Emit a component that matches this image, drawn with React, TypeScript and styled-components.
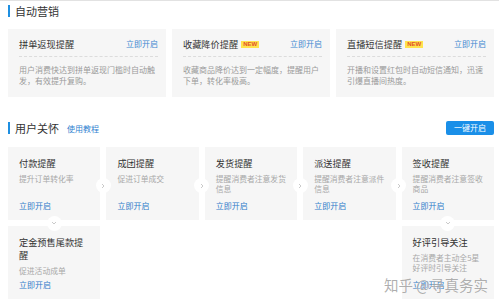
import React from "react";
import styled, { createGlobalStyle, css } from "styled-components";

const GlobalStyle = createGlobalStyle`
  * { box-sizing: border-box; }
  html, body { margin: 0; padding: 0; background: #fff; }
  body {
    font-family: "Noto Sans CJK SC", "Noto Sans", sans-serif;
    color: #333;
  }
`;

const Page = styled.div`
  position: relative;
  width: 499px;
  height: 308px;
  overflow: hidden;
  border-top: 1px solid #e2e2e2;
  padding: 0 5px 0 8px;
`;

const SectionHead = styled.div<{ $top: number }>`
  display: flex;
  align-items: center;
  height: 14px;
  margin-top: ${({ $top }) => $top}px;
`;

const HeadTitle = styled.h2`
  margin: 0;
  padding-left: 5px;
  border-left: 2px solid #1e8fe1;
  font-size: 11px;
  line-height: 12px;
  font-weight: normal;
  color: #333;
`;

const HelpLink = styled.a`
  margin-left: 8px;
  font-size: 8px;
  color: #2f7fd0;
  text-decoration: none;
`;

const OneKeyButton = styled.button`
  margin-left: auto;
  width: 48px;
  height: 14px;
  padding: 0;
  border: none;
  border-radius: 2px;
  background: #1a8fe8;
  color: #fff;
  font-family: inherit;
  font-size: 8px;
  line-height: 14px;
`;

const PromoGrid = styled.div`
  display: grid;
  grid-template-columns: repeat(3, 1fr);
  gap: 6px;
  margin-top: 11px;
`;

const PromoCard = styled.div`
  height: 68px;
  background: #f6f6f6;
  padding: 8px 8px 0 11px;
`;

const PromoHead = styled.div`
  display: flex;
  align-items: center;
  height: 20px;
  padding-bottom: 5px;
  border-bottom: 1px dashed #dcdcdc;
`;

const PromoTitle = styled.span`
  font-size: 9.2px;
  line-height: 14px;
  color: #333;
`;

const NewBadge = styled.span`
  margin-left: 3px;
  padding: 0 2px;
  background: #ffe34d;
  color: #e2512a;
  font-family: "Liberation Sans", Arial, sans-serif;
  font-size: 6px;
  font-weight: bold;
  line-height: 7px;
`;

const PromoLink = styled.a`
  margin-left: auto;
  font-size: 8px;
  line-height: 14px;
  color: #3d86d0;
  text-decoration: none;
`;

const PromoDesc = styled.p`
  margin: 7px 0 0;
  font-size: 8px;
  line-height: 11px;
  color: #9a9a9a;
`;

const CareGrid = styled.div`
  display: grid;
  grid-template-columns: repeat(5, 1fr);
  grid-auto-rows: 73px;
  gap: 6px;
  margin-top: 12px;
`;

const CareCard = styled.div<{ $col?: number }>`
  position: relative;
  display: flex;
  flex-direction: column;
  background: #f6f6f6;
  padding: 10px 9px 8px 11px;
  ${({ $col }) => $col && css`grid-column: ${$col};`}
`;

const CareTitle = styled.div`
  font-size: 9.2px;
  line-height: 13px;
  color: #333;
`;

const CareDesc = styled.div`
  margin-top: 4px;
  font-size: 7.8px;
  line-height: 10px;
  color: #a8a8a8;
`;

const CareLink = styled.a`
  margin-top: auto;
  font-size: 8px;
  line-height: 12px;
  color: #2f7bc9;
  text-decoration: none;
`;

const Connector = styled.span<{ $dir: "right" | "down" }>`
  position: absolute;
  z-index: 1;
  width: 15px;
  height: 15px;
  border-radius: 50%;
  background: #fff;
  display: flex;
  align-items: center;
  justify-content: center;
  ${({ $dir }) =>
    $dir === "right"
      ? css`
          right: -10.5px;
          top: 31px;
        `
      : css`
          left: 50%;
          margin-left: -7.5px;
          bottom: -10.5px;
        `}
`;

const Watermark = styled.div`
  position: absolute;
  right: 11px;
  top: 275px;
  z-index: 2;
  font-size: 14.5px;
  line-height: 18px;
  color: rgba(120, 120, 120, 0.6);
  text-shadow: 0 0 1px rgba(255, 255, 255, 0.9);
  white-space: nowrap;
`;

const Chevron = ({ dir }: { dir: "right" | "down" }) => (
  <svg width="6" height="6" viewBox="0 0 6 6">
    <polyline
      points={dir === "right" ? "2,1 4,3 2,5" : "1,2 3,4 5,2"}
      fill="none"
      stroke="#c4c4c4"
      strokeWidth="0.9"
    />
  </svg>
);

const promos = [
  {
    title: "拼单返现提醒",
    isNew: false,
    desc: "用户消费快达到拼单返现门槛时自动触发，有效提升复购。",
  },
  {
    title: "收藏降价提醒",
    isNew: true,
    desc: "收藏商品降价达到一定幅度，提醒用户下单，转化率极高。",
  },
  {
    title: "直播短信提醒",
    isNew: true,
    desc: "开播和设置红包时自动短信通知，迅速引爆直播间热度。",
  },
];

type Care = {
  title: string;
  desc: string;
  col?: number;
  arrow?: "right" | "down";
};

const cares: Care[] = [
  { title: "付款提醒", desc: "提升订单转化率", arrow: "right" },
  { title: "成团提醒", desc: "促进订单成交", arrow: "right" },
  { title: "发货提醒", desc: "提醒消费者注意发货信息", arrow: "right" },
  { title: "派送提醒", desc: "提醒消费者注意派件信息", arrow: "right" },
  { title: "签收提醒", desc: "提醒消费者注意签收商品", arrow: "down" },
  { title: "定金预售尾款提醒", desc: "促进活动成单", col: 1 },
  { title: "好评引导关注", desc: "在消费者主动全5星好评时引导关注", col: 5 },
];

export default function App() {
  return (
    <>
      <GlobalStyle />
      <Page>
        <SectionHead $top={3}>
          <HeadTitle>自动营销</HeadTitle>
        </SectionHead>
        <PromoGrid>
          {promos.map((p) => (
            <PromoCard key={p.title}>
              <PromoHead>
                <PromoTitle>{p.title}</PromoTitle>
                {p.isNew && <NewBadge>NEW</NewBadge>}
                <PromoLink>立即开启</PromoLink>
              </PromoHead>
              <PromoDesc>{p.desc}</PromoDesc>
            </PromoCard>
          ))}
        </PromoGrid>

        <SectionHead $top={24}>
          <HeadTitle>用户关怀</HeadTitle>
          <HelpLink>使用教程</HelpLink>
          <OneKeyButton>一键开启</OneKeyButton>
        </SectionHead>
        <CareGrid>
          {cares.map((c, i) => (
            <CareCard key={c.title} $col={c.col}>
              <CareTitle>{c.title}</CareTitle>
              <CareDesc>{c.desc}</CareDesc>
              <CareLink>立即开启</CareLink>
              {c.arrow && (
                <Connector $dir={c.arrow}>
                  <Chevron dir={c.arrow} />
                </Connector>
              )}
              {i === 0 && (
                <Connector $dir="down">
                  <Chevron dir="down" />
                </Connector>
              )}
            </CareCard>
          ))}
        </CareGrid>
        <Watermark>知乎 @寻真务实</Watermark>
      </Page>
    </>
  );
}
